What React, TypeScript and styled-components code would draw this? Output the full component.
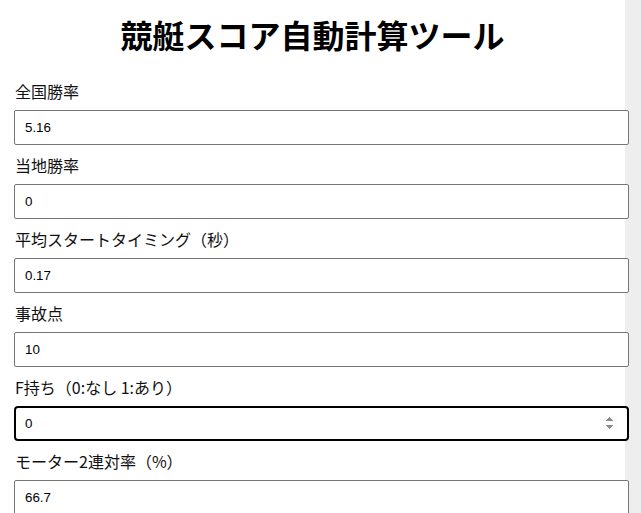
import React from 'react';
import styled, { createGlobalStyle } from 'styled-components';

const GlobalStyle = createGlobalStyle`
  html, body {
    margin: 0;
    padding: 0;
    background: #eeeeee;
    overflow: hidden;
  }
`;

const Page = styled.div`
  box-sizing: border-box;
  width: 625px;
  min-height: 100vh;
  background: #ffffff;
  padding: 12px 0 0 14px;
  font-family: "Noto Sans CJK JP", "Noto Sans", sans-serif;
  color: #111;
`;

const Title = styled.h1`
  margin: 0 0 25px;
  font-size: 32px;
  line-height: 44px;
  font-weight: 700;
  text-align: center;
  padding-right: 14px;
  color: #000;
`;

const Field = styled.div`
  display: flex;
  flex-direction: column;
  margin-bottom: 10px;
`;

const Label = styled.label`
  display: block;
  font-size: 16px;
  line-height: 20px;
  margin-bottom: 9px;
  padding-left: 1px;
`;

const Input = styled.input<{ $active?: boolean }>`
  box-sizing: border-box;
  width: 615px;
  height: 35px;
  padding: 0 10px;
  font-family: "Liberation Sans", Arial, sans-serif;
  font-size: 13.33px;
  color: #000;
  background: #fff;
  border: ${({ $active }) => ($active ? '2px solid #000' : '1px solid #767676')};
  border-radius: ${({ $active }) => ($active ? '4px' : '2px')};
  padding-left: ${({ $active }) => ($active ? '9px' : '10px')};
  outline: none;

  &:focus {
    outline: none;
  }
`;

interface FieldDef {
  label: string;
  value: string;
  active?: boolean;
}

const fields: FieldDef[] = [
  { label: '全国勝率', value: '5.16' },
  { label: '当地勝率', value: '0' },
  { label: '平均スタートタイミング（秒）', value: '0.17' },
  { label: '事故点', value: '10' },
  { label: 'F持ち（0:なし 1:あり）', value: '0', active: true },
  { label: 'モーター2連対率（%）', value: '66.7' },
  { label: 'ボート2連対率（%）', value: '40.2' },
];

export default function App() {
  return (
    <>
      <GlobalStyle />
      <Page>
        <Title>競艇スコア自動計算ツール</Title>
        {fields.map((f, i) => (
          <Field key={i}>
            <Label htmlFor={`f${i}`}>{f.label}</Label>
            <Input
              id={`f${i}`}
              type="number"
              defaultValue={f.value}
              $active={f.active}
              autoFocus={f.active}
            />
          </Field>
        ))}
      </Page>
    </>
  );
}
